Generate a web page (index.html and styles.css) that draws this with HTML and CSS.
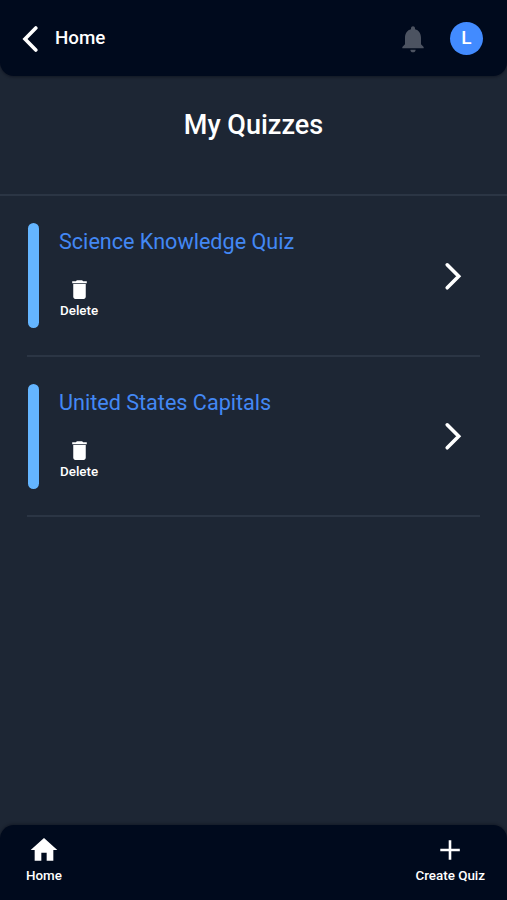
FILE: index.html
```html
<!DOCTYPE html>
<html lang="en">
<head>
<meta charset="utf-8">
<meta name="viewport" content="width=device-width, initial-scale=1">
<title>My Quizzes</title>
<link rel="stylesheet" href="styles.css">
</head>
<body>
<header class="topbar">
  <a class="back">
    <svg width="18" height="28" viewBox="0 0 18 28"><path class="chevron" d="M15.8 3 5 14l10.800 11"/></svg>
    <span>Home</span>
  </a>
  <div class="account">
    <svg class="bell" width="32" height="32" viewBox="0 0 24 24"><path d="M12 22c1.1 0 2-.9 2-2h-4c0 1.1.89 2 2 2zm6-6v-5c0-3.07-1.64-5.64-4.5-6.32V4c0-.83-.67-1.500-1.500-1.500s-1.500.67-1.500 1.500v.68C7.630 5.360 6 7.920 6 11v5l-2 2v1h16v-1l-2-2z"/></svg>
    <div class="avatar">L</div>
  </div>
</header>
<main>
  <h1 class="title">My Quizzes</h1>
  <ul class="quizzes">
    <li class="quiz">
      <span class="accent"></span>
      <div class="details">
        <h2 class="name">Science Knowledge Quiz</h2>
        <button class="delete">
          <svg width="25" height="25" viewBox="0 0 24 24"><path d="M6 19c0 1.1.9 2 2 2h8c1.1 0 2-.9 2-2V6.600H6V19zM19 4h-3.500l-1-1h-5l-1 1H5v2h14V4z"/></svg>
          <span>Delete</span>
        </button>
      </div>
      <svg class="open" width="20" height="30" viewBox="0 0 20 30"><path class="chevron" d="m5.200 3.800 11.500 11.500L5.200 26.800"/></svg>
    </li>
    <li class="quiz">
      <span class="accent"></span>
      <div class="details">
        <h2 class="name">United States Capitals</h2>
        <button class="delete">
          <svg width="25" height="25" viewBox="0 0 24 24"><path d="M6 19c0 1.1.9 2 2 2h8c1.1 0 2-.9 2-2V6.600H6V19zM19 4h-3.500l-1-1h-5l-1 1H5v2h14V4z"/></svg>
          <span>Delete</span>
        </button>
      </div>
      <svg class="open" width="20" height="30" viewBox="0 0 20 30"><path class="chevron" d="m5.200 3.800 11.500 11.500L5.200 26.800"/></svg>
    </li>
  </ul>
</main>
<nav class="bottombar">
  <a class="tab">
    <svg width="32" height="32" viewBox="0 0 24 24"><path d="M10 20v-6h4v6h5v-8h3L12 3 2 12h3v8z"/></svg>
    <span>Home</span>
  </a>
  <a class="tab">
    <svg width="32" height="32" viewBox="0 0 32 32"><path d="M14.700 6.300h2.600v8.400h8.500v2.600h-8.500v8.500h-2.600v-8.500H6.300v-2.600h8.400z"/></svg>
    <span>Create Quiz</span>
  </a>
</nav>
</body>
</html>
```
FILE: styles.css
```css
* { box-sizing: border-box; }

body {
  margin: 0;
  height: 900px;
  display: flex;
  flex-direction: column;
  overflow: hidden;
  background: #1d2634;
  color: #fff;
  font-family: Roboto, "Liberation Sans", sans-serif;
}

svg { display: block; fill: currentColor; flex: none; }

.chevron {
  fill: none;
  stroke: currentColor;
  stroke-width: 3.6;
  stroke-linecap: round;
}

.topbar {
  height: 76px;
  padding: 0 24px 0 20px;
  display: flex;
  align-items: center;
  justify-content: space-between;
  background: #000a1d;
  border-radius: 0 0 14px 14px;
  box-shadow: 0 1px 3px rgba(0, 5, 15, 0.45);
}

.back {
  display: flex;
  align-items: center;
  gap: 17px;
  font-size: 18.8px;
  font-weight: 500;
  line-height: 24px;
}

.back svg { margin-top: 2px; }

.account { display: flex; align-items: center; gap: 21.5px; }

.bell { color: #4c5361; margin-top: 1px; }

.avatar {
  width: 33px;
  height: 33px;
  margin-top: 1px;
  border-radius: 50%;
  background: #428bff;
  font-size: 19px;
  font-weight: 500;
  line-height: 32px;
  text-align: center;
}

main { flex: 1; }

.title {
  height: 120px;
  margin: 0;
  padding-top: 33px;
  border-bottom: 2px solid #2b3544;
  font-size: 27px;
  font-weight: 500;
  line-height: 32px;
  text-align: center;
}

.quizzes { margin: 0; padding: 0 27px; list-style: none; }

.quiz {
  height: 160.5px;
  padding: 27px 18px 26px 1px;
  display: flex;
  align-items: center;
  border-bottom: 2px solid #2b3544;
}

.accent {
  width: 11px;
  height: 105px;
  border-radius: 6px;
  background: #64b5ff;
}

.details {
  flex: 1;
  align-self: stretch;
  padding: 5px 0 0 20px;
  display: flex;
  flex-direction: column;
  align-items: flex-start;
}

.name {
  margin: 0;
  color: #4388f4;
  font-size: 21.6px;
  font-weight: 400;
  line-height: 28px;
}

.delete {
  margin: 21px 0 0;
  padding: 0 0 0 1px;
  border: 0;
  background: none;
  color: #fff;
  display: flex;
  flex-direction: column;
  align-items: center;
  font: 500 13.4px/18px Roboto, "Liberation Sans", sans-serif;
}

.bottombar {
  height: 75px;
  padding: 9px 22px 0 26px;
  display: flex;
  justify-content: space-between;
  background: #000a1d;
  border-radius: 14px 14px 0 0;
  box-shadow: 0 -1px 3px rgba(0, 5, 15, 0.35);
}

.tab {
  display: flex;
  flex-direction: column;
  align-items: center;
  font-size: 13.4px;
  font-weight: 500;
  line-height: 19px;
}
```
